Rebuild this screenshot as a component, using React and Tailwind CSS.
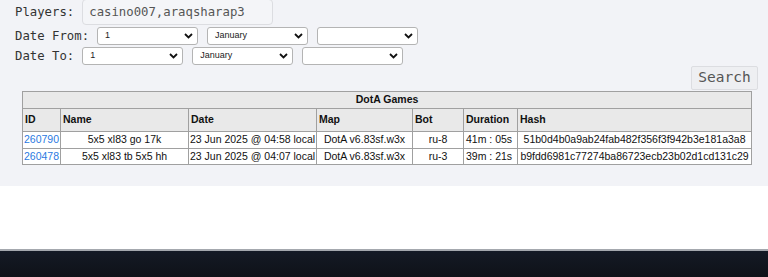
const games = [
  { id: '260790', name: '5x5 xl83 go 17k', date: '23 Jun 2025 @ 04:58 local', map: 'DotA v6.83sf.w3x', bot: 'ru-8', duration: '41m : 05s', hash: '51b0d4b0a9ab24fab482f356f3f942b3e181a3a8' },
  { id: '260478', name: '5x5 xl83 tb 5x5 hh', date: '23 Jun 2025 @ 04:07 local', map: 'DotA v6.83sf.w3x', bot: 'ru-3', duration: '39m : 21s', hash: 'b9fdd6981c77274ba86723ecb23b02d1cd131c29' },
]

const mono = { fontFamily: '"DejaVu Sans Mono", monospace' }

function Chevron() {
  return (
    <svg width="9" height="6" viewBox="0 0 9 6" className="shrink-0">
      <path d="M1 1l3.5 3.5L8 1" fill="none" stroke="#111" strokeWidth="1.8" />
    </svg>
  )
}

function FakeSelect({ value }) {
  return (
    <div className="w-[101px] h-[18px] flex items-center justify-between pl-[7px] pr-[4px] bg-white border border-[#b4b4b4] rounded-[3px] text-[9px] text-[#222] font-['Liberation_Sans',sans-serif]">
      <span>{value}</span>
      <Chevron />
    </div>
  )
}

function DateRow({ label }) {
  return (
    <div className="flex items-center h-[18px] mt-[2px]">
      <span className="mr-2 text-[12.3px] text-[#333]" style={mono}>{label}</span>
      <div className="flex gap-[9px]">
        <FakeSelect value="1" />
        <FakeSelect value="January" />
        <FakeSelect value="" />
      </div>
    </div>
  )
}

export default function App() {
  return (
    <div className="w-[768px] h-[277px] flex flex-col bg-white overflow-hidden">
      <div className="h-[186px] bg-[#f2f3f7] shrink-0">
        <div className="pl-[15px]">
          <div className="flex items-center h-[26px] -mt-px">
            <span className="mr-2 text-[12.3px] text-[#333]" style={mono}>Players:</span>
            <div className="w-[191px] h-[26px] flex items-center px-[6px] bg-[#f4f5f8] border border-[#dcdde1] rounded-[4px] text-[12.3px] text-[#555]" style={mono}>
              casino007,araqsharap3
            </div>
          </div>
          <DateRow label="Date From:" />
          <DateRow label="Date To:" />
        </div>

        <div className="flex justify-end pr-[10px] mt-px">
          <button className="w-[67px] h-[24px] bg-[#eeeff2] border border-[#dcdde1] rounded-[2px] text-[14.5px] text-[#555]" style={mono}>
            Search
          </button>
        </div>

        <table className="mt-px ml-[22px] w-[729px] table-fixed border-collapse text-[10.5px] text-[#111] font-['Liberation_Sans',Arial,sans-serif]">
          <colgroup>
            <col className="w-[38px]" />
            <col className="w-[128px]" />
            <col className="w-[128px]" />
            <col className="w-[96px]" />
            <col className="w-[51px]" />
            <col className="w-[54px]" />
            <col className="w-[234px]" />
          </colgroup>
          <thead>
            <tr className="h-[16px] bg-[#e9e9e9]">
              <th colSpan={7} className="border border-[#a0a0a0] font-bold text-center p-0">DotA Games</th>
            </tr>
            <tr className="h-[23px] bg-[#e9e9e9] text-left">
              {['ID', 'Name', 'Date', 'Map', 'Bot', 'Duration', 'Hash'].map((h) => (
                <th key={h} className="border border-[#a0a0a0] font-bold px-[2px] py-0">{h}</th>
              ))}
            </tr>
          </thead>
          <tbody>
            {games.map((g) => (
              <tr key={g.id} className="h-[16px] bg-white">
                <td className="border border-[#a0a0a0] px-px py-0 text-[#2a7ae2]">{g.id}</td>
                <td className="border border-[#a0a0a0] px-[2px] py-0 text-center">{g.name}</td>
                <td className="border border-[#a0a0a0] px-px py-0 whitespace-nowrap">{g.date}</td>
                <td className="border border-[#a0a0a0] px-[2px] py-0 text-center">{g.map}</td>
                <td className="border border-[#a0a0a0] px-[2px] py-0 text-center">{g.bot}</td>
                <td className="border border-[#a0a0a0] px-[2px] py-0 whitespace-nowrap">{g.duration}</td>
                <td className="border border-[#a0a0a0] px-[2px] py-0 text-center whitespace-nowrap">{g.hash}</td>
              </tr>
            ))}
          </tbody>
        </table>
      </div>

      <div className="flex-1 bg-white" />
      <div className="h-[2px] bg-[#a4a8ae]" />
      <div className="h-[26px] bg-gradient-to-b from-[#141a26] to-[#0f1218]" />
    </div>
  )
}
